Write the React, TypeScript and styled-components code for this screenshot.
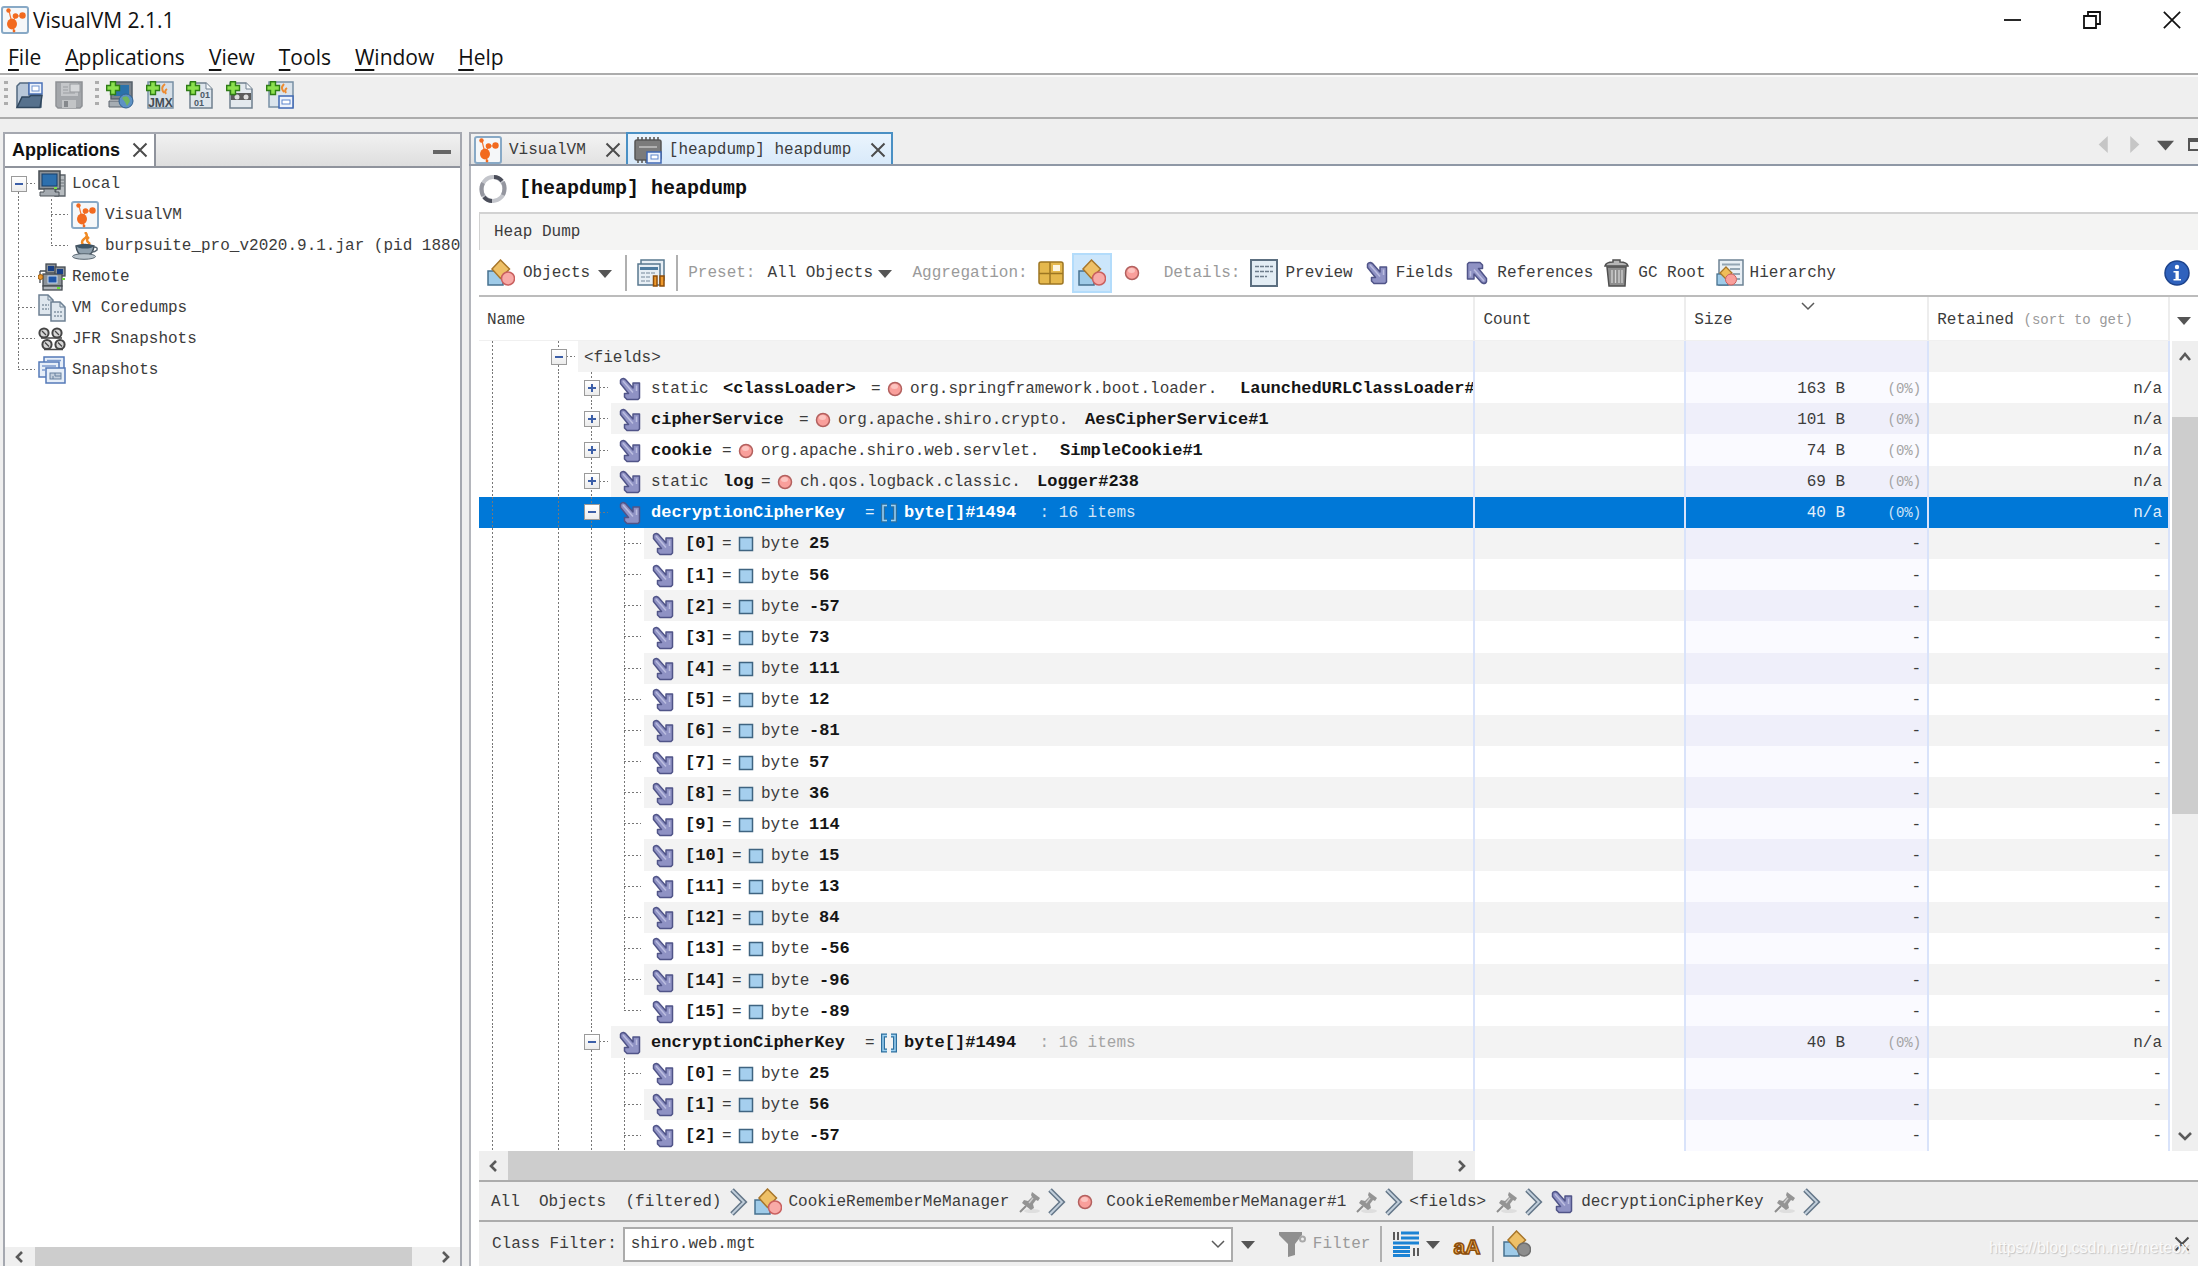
import React from 'react';
import styled, { createGlobalStyle, css } from 'styled-components';

const mono = `"Liberation Mono", "Noto Sans CJK SC", monospace`;
const ui = `"Open Sans", "Noto Sans", sans-serif`;

const Global = createGlobalStyle`
  * { box-sizing: border-box; }
  body { margin: 0; background: #efefef; color: #3c3c3c; font: 16px/20px ${mono}; }
  button, input, select { font: inherit; color: inherit; margin: 0; }
  svg { display: block; flex: none; }
`;

/* ---------- icons ---------- */

const VmIcon = () => (
  <svg width="28" height="28" viewBox="0 0 28 28">
    <rect x="1" y="1" width="26" height="26" rx="2" fill="#f5f7f9" stroke="#88a9c6" strokeWidth="2" />
    <path d="M8 5 L11 17 M11 17 L13 25 M11 17 L15 10 H22" stroke="#f47b3a" strokeWidth="1.2" fill="none" />
    <g fill="#f26a1f">
      <ellipse cx="11" cy="18" rx="5" ry="5.4" />
      <circle cx="7.5" cy="4.5" r="2.2" />
      <circle cx="14.5" cy="10" r="2.8" />
      <circle cx="21.5" cy="9.5" r="3.2" />
      <circle cx="13" cy="25" r="1.4" />
    </g>
  </svg>
);

const ShapesIcon = ({ muted = false }: { muted?: boolean }) => (
  <svg width="28" height="28" viewBox="0 0 28 28">
    <rect x="1" y="12" width="15" height="14" fill="#9fcbe8" stroke="#47718f" strokeWidth="1.5" />
    <path d="M13.5 1 L22.5 10 L13.5 19.5 L5 10 Z" fill="#eec067" stroke="#a8762a" strokeWidth="1.5" />
    <circle cx="21" cy="19.5" r="6.5" fill={muted ? '#8d8d8d' : '#f8aaa7'} stroke={muted ? '#6f6f6f' : '#c9605f'} strokeWidth="1.5" />
  </svg>
);

const ArrowIcon = ({ up = false }: { up?: boolean }) => (
  <svg width="22" height="24" viewBox="0 0 22 24">
    <g transform={up ? 'rotate(180 11 12)' : undefined}>
      <path
        d="M1.5 3.5 Q2 1.5 4.5 1.5 L6.5 2.5 L14 11 V6 H20.5 V21 L19 22.5 H8 L5.5 20 V16.5 H9.5 L1.5 6.5 Z"
        fill="#8f92c4" stroke="#505488" strokeWidth="1.5" strokeLinejoin="round"
      />
      <path d="M4 4 L14 15.5 M17.5 8.500 V14" fill="none" stroke="#bcbee0" strokeWidth="1.5" />
    </g>
  </svg>
);

const DotIcon = () => (
  <svg width="16" height="16" viewBox="0 0 16 16">
    <circle cx="8" cy="8" r="6.5" fill="#f99f9b" stroke="#b3605e" strokeWidth="1.5" />
    <ellipse cx="7.5" cy="5.5" rx="3.5" ry="2.5" fill="#fcc4c0" />
  </svg>
);

const ByteIcon = () => (
  <svg width="16" height="16" viewBox="0 0 16 16">
    <rect x="1.5" y="1.5" width="13" height="13" fill="#a5cfee" stroke="#3f6481" strokeWidth="1.5" />
  </svg>
);

const ArrayIcon = () => (
  <svg width="18" height="20" viewBox="0 0 18 20">
    <path d="M7 2.5 H3 V17.5 H7 M11 2.5 H15 V17.5 H11" fill="none" stroke="#2d6f9e" strokeWidth="4" />
    <path d="M7 2.5 H3 V17.5 H7 M11 2.5 H15 V17.5 H11" fill="none" stroke="#9fd2f2" strokeWidth="1.5" />
  </svg>
);

const Triangle = ({ dir = 'down', color = '#555', size = 14 }: { dir?: string; color?: string; size?: number }) => (
  <svg width={size} height={size} viewBox="0 0 14 14">
    {dir === 'down' && <path d="M0 4 H14 L7 12 Z" fill={color} />}
    {dir === 'left' && <path d="M10.5 0 V14 L3 7 Z" fill={color} />}
    {dir === 'right' && <path d="M3.5 0 V14 L11 7 Z" fill={color} />}
  </svg>
);

const Chevron = ({ dir, thin = false }: { dir: 'left' | 'right' | 'up' | 'down'; thin?: boolean }) => {
  const paths = { left: 'M9 2 L4 7 L9 12', right: 'M5 2 L10 7 L5 12', up: 'M2 10 L7 4 L12 10', down: 'M1 4 L7 10 L13 4' };
  return (
    <svg width="14" height="14" viewBox="0 0 14 14">
      <path d={paths[dir]} fill="none" stroke="#5a5a5a" strokeWidth={thin ? 1.5 : 2.6} />
    </svg>
  );
};

const Cross = ({ size = 16, color = '#4c4c4c', width = 2 }: { size?: number; color?: string; width?: number }) => (
  <svg width={size} height={size} viewBox="0 0 16 16">
    <path d="M1.5 1.5 L14.5 14.5 M14.5 1.5 L1.5 14.5" stroke={color} strokeWidth={width} fill="none" />
  </svg>
);

const Plus = () => (
  <path d="M4.5 0.7 H9.5 V4.5 H13.5 V9.5 H9.5 V13.5 H4.5 V9.5 H0.7 V4.5 H4.5 Z" fill="#8be04e" stroke="#2f7d16" strokeWidth="1.4" />
);

const OpenIcon = () => (
  <svg width="28" height="28" viewBox="0 0 28 28">
    <path d="M2 26 V5 L5 2 H14 V14 H26 V26 Z" fill="#b8c7d8" stroke="#51687f" strokeWidth="1.5" />
    <rect x="14" y="2" width="13" height="11" fill="#eef3fb" stroke="#4a72b8" strokeWidth="1.5" />
    <rect x="17" y="5" width="7" height="5" fill="#fff" stroke="#6f93d0" />
    <path d="M2 26.5 L7 16 H14 L16 14.5 H27 L25 26.5 Z" fill="#56718d" stroke="#2f465d" strokeWidth="1.5" />
  </svg>
);

const SaveIcon = () => (
  <svg width="28" height="28" viewBox="0 0 28 28">
    <path d="M1 1 H27 V25 L25 27 H3 L1 25 Z" fill="#a3a6aa" stroke="#8e9195" strokeWidth="1.5" />
    <rect x="6" y="2" width="17" height="13" fill="#c4c6c9" />
    <rect x="15" y="3" width="10" height="8" fill="#d6d8da" stroke="#96999d" />
    <path d="M8 6 H13 M8 9 H13 M8 12 H20" stroke="#9a9da1" />
    <rect x="7" y="19" width="14" height="8" fill="#c2c4c6" />
    <rect x="9" y="20" width="4" height="6" fill="#85888c" />
  </svg>
);

const AddRemoteIcon = () => (
  <svg width="28" height="28" viewBox="0 0 28 28">
    <rect x="5" y="1" width="21" height="17" fill="#7c858e" stroke="#56606a" strokeWidth="1.5" />
    <rect x="8" y="4" width="15" height="11" fill="#2b72aa" />
    <path d="M3 20 H20 V26 H3 Z" fill="#a6adb3" stroke="#5c656e" />
    <circle cx="20" cy="20" r="7" fill="#5d91c4" stroke="#33618f" />
    <path d="M16 17 Q19 14 22 16 L24 20 L21 25 L19 21 Z" fill="#70b65b" />
    <Plus />
  </svg>
);

const AddJmxIcon = () => (
  <svg width="28" height="28" viewBox="0 0 28 28">
    <rect x="2" y="1" width="25" height="26" fill="#d5dfe8" stroke="#7890a5" strokeWidth="1.5" />
    <path d="M19 3 Q14 7 18 12 M21 8 Q18 10 20 13" stroke="#ec8b33" strokeWidth="2" fill="none" />
    <text x="14.5" y="26" textAnchor="middle" fontFamily="Liberation Sans" fontWeight="700" fontSize="12" fill="#444d55">JMX</text>
    <Plus />
  </svg>
);

const AddCoreIcon = () => (
  <svg width="28" height="28" viewBox="0 0 28 28">
    <path d="M4 2 H20 L26 8 V27 H4 Z" fill="#dfe6ed" stroke="#70808f" strokeWidth="1.5" />
    <path d="M20 2 V8 H26" fill="#f6f9fb" stroke="#70808f" />
    <text x="19" y="17" textAnchor="middle" fontFamily="Liberation Sans" fontWeight="700" fontSize="9" fill="#4d5a66">01</text>
    <text x="13" y="25" textAnchor="middle" fontFamily="Liberation Sans" fontWeight="700" fontSize="9" fill="#4d5a66">01</text>
    <Plus />
  </svg>
);

const AddJfrIcon = () => (
  <svg width="28" height="28" viewBox="0 0 28 28">
    <path d="M4 2 H20 L26 8 V27 H4 Z" fill="#e3e9ee" stroke="#70808f" strokeWidth="1.5" />
    <path d="M20 2 V8 H26" fill="#f6f9fb" stroke="#70808f" />
    <path d="M5 19 H25 V12 H5 Z" fill="#5b5b5b" />
    <circle cx="11" cy="16" r="2.5" fill="#ddd" />
    <circle cx="20" cy="16" r="2.5" fill="#ddd" />
    <Plus />
  </svg>
);

const AddSnapshotIcon = () => (
  <svg width="28" height="28" viewBox="0 0 28 28">
    <rect x="3" y="1" width="24" height="25" fill="#dbe4ec" stroke="#7890a5" strokeWidth="1.5" />
    <path d="M18 3 Q14 7 18 11 M21 7 Q18 9 20 12" stroke="#ec8b33" strokeWidth="2" fill="none" />
    <rect x="13" y="15" width="14" height="12" fill="#eef3fb" stroke="#3f68b4" strokeWidth="1.5" />
    <rect x="16" y="19" width="8" height="4" fill="#fff" stroke="#5c85cc" />
    <Plus />
  </svg>
);

const LocalIcon = () => (
  <svg width="28" height="28" viewBox="0 0 28 28">
    <path d="M20 5 H27 V26 H17 Z" fill="#b7bcc0" stroke="#5b6268" strokeWidth="1.3" />
    <path d="M22 10 H26 M22 13 H26 M22 16 H26" stroke="#6c747b" />
    <rect x="1" y="1" width="21" height="18" fill="#8c9399" stroke="#464c52" strokeWidth="1.5" />
    <rect x="4" y="4" width="15" height="12" fill="#2d70ae" stroke="#173f6a" />
    <path d="M6 19 H17 V22 H21 V26 H2 V22 H6 Z" fill="#a4aab0" stroke="#4c5359" />
    <rect x="16" y="17" width="3" height="2" fill="#7be04a" />
  </svg>
);

const RemoteIcon = () => (
  <svg width="28" height="28" viewBox="0 0 28 28">
    <g fill="#8c9399" stroke="#464c52" strokeWidth="1.3">
      <rect x="8" y="1" width="10" height="9" />
      <rect x="17" y="4" width="10" height="9" />
      <path d="M2 8 V20 M2 8 H8" fill="none" />
      <rect x="5" y="11" width="19" height="12" />
      <rect x="5" y="23" width="19" height="4" fill="#b2b7bb" />
    </g>
    <rect x="10" y="3" width="6" height="5" fill="#173f86" />
    <rect x="19" y="6" width="6" height="5" fill="#173f86" />
    <rect x="10" y="13" width="9" height="7" fill="#1f56a8" stroke="#c7d8ee" />
    <circle cx="2.5" cy="14" r="2.5" fill="#e9962f" stroke="#9c5f12" />
    <path d="M24 16 H27 M19 25 H22" stroke="#6adf33" strokeWidth="2" />
  </svg>
);

const CoredumpIcon = () => (
  <svg width="28" height="28" viewBox="0 0 28 28">
    <g fill="#dfe7ee" stroke="#6d8093" strokeWidth="1.5">
      <path d="M1 1 H10 L15 6 V21 H1 Z" />
      <path d="M13 8 H22 L27 13 V27 H13 Z" />
    </g>
    <path d="M10 1 V6 H15 M22 8 V13 H27" fill="none" stroke="#6d8093" />
    <path d="M4 11 H11 M4 15 H11 M16 18 H24 M16 22 H24" stroke="#8494a3" strokeWidth="1.5" strokeDasharray="2 1" />
  </svg>
);

const JfrIcon = () => (
  <svg width="28" height="24" viewBox="0 0 28 24">
    <g fill="#d6d6d6" stroke="#454545" strokeWidth="2">
      <circle cx="6" cy="6" r="4.6" />
      <circle cx="19" cy="6" r="4.6" />
      <circle cx="9" cy="17.5" r="4.6" />
      <circle cx="22" cy="17.5" r="4.6" />
    </g>
    <path d="M3 11 H24 M6 22.5 H25 M4 4 L8 8 M17 4 L21 8 M7 15.500 L11 19.500 M20 15.500 L24 19.500" stroke="#454545" strokeWidth="1.3" />
  </svg>
);

const SnapshotsIcon = () => (
  <svg width="28" height="28" viewBox="0 0 28 28">
    <g fill="#e6eef8" stroke="#5479b8" strokeWidth="1.5">
      <rect x="6" y="1" width="20" height="16" />
      <rect x="1" y="6" width="20" height="15" />
      <rect x="8" y="12" width="19" height="15" />
    </g>
    <path d="M9 4.5 H23 M4 10 H18 M4 14 H7" stroke="#7d9bcd" strokeWidth="1.5" />
    <rect x="12" y="17" width="11" height="6" fill="#c3cfdd" stroke="#66809e" />
    <path d="M17 17 V20 H23 M15 20 V23" stroke="#66809e" fill="none" />
  </svg>
);

const JavaIcon = () => (
  <svg width="28" height="28" viewBox="0 0 28 28">
    <path d="M14 0 Q18 4 13 7 Q9 10 13 14 M18 5 Q14 8 18 11 Q19 12 17 14" stroke="#f08a24" strokeWidth="2.5" fill="none" />
    <path d="M5 14 Q14 11 23 14 Q22 22 17 23 H11 Q6 22 5 14 Z" fill="#8fa0ad" stroke="#44525e" strokeWidth="1.5" />
    <ellipse cx="14" cy="14.5" rx="8" ry="2" fill="#3d5566" />
    <path d="M23 15 Q27 15 26 18 Q24 20 21 20" stroke="#5a6873" strokeWidth="1.5" fill="none" />
    <ellipse cx="13" cy="24.5" rx="11.5" ry="2.8" fill="#b8c3cb" stroke="#56646f" />
  </svg>
);

const HeapIcon = () => (
  <svg width="28" height="28" viewBox="0 0 28 28">
    <path d="M4 1 V27 M8 1 V27 M12 1 V27 M16 1 V27 M20 1 V27 M24 1 V27" stroke="#777" strokeWidth="2" />
    <rect x="1" y="4" width="26" height="20" rx="2" fill="#7b7b7b" stroke="#565656" strokeWidth="1.5" />
    <path d="M5 11 H23" stroke="#b0b0b0" strokeWidth="2" />
    <rect x="13" y="16" width="14" height="11" fill="#eef3fb" stroke="#3f68b4" strokeWidth="1.5" />
    <rect x="17" y="19" width="7" height="4" fill="#fff" stroke="#5c85cc" />
  </svg>
);

const SpinnerIcon = () => (
  <svg width="28" height="30" viewBox="0 0 28 30">
    <ellipse cx="14" cy="15" rx="11.5" ry="12" fill="none" stroke="#c3c5cb" strokeWidth="4" />
    <path d="M24 8 Q27 14 24 21 M4 22 Q1 15 4 9" fill="none" stroke="#94969f" strokeWidth="4" />
    <path d="M15 3 Q20 3 23 7 M5 23 Q8 27 13 27" fill="none" stroke="#4b4e5a" strokeWidth="4" />
  </svg>
);

const ReportIcon = () => (
  <svg width="28" height="28" viewBox="0 0 28 28">
    <rect x="4" y="1" width="23" height="20" fill="#e8eff5" stroke="#58788f" strokeWidth="1.5" />
    <rect x="1" y="5" width="22" height="21" fill="#e8eff5" stroke="#58788f" strokeWidth="1.5" />
    <rect x="3" y="8" width="18" height="3" fill="#4f7ca0" />
    <path d="M4 14 H19 M4 18 H14 M4 22 H14" stroke="#9aabb8" strokeWidth="1.5" strokeDasharray="4 1" />
    <path d="M16.5 17 H20 V27 H16.5 Z M23 17 H27 V27 H23 Z" fill="#ef9a2c" stroke="#8d4e0b" strokeWidth="1.5" />
  </svg>
);

const PackageIcon = () => (
  <svg width="26" height="26" viewBox="0 0 26 26">
    <rect x="1" y="2" width="24" height="22" rx="2" fill="#e5b84d" stroke="#9d7622" strokeWidth="1.5" />
    <path d="M12 2 V24 M1 13.5 H25" stroke="#9d7622" strokeWidth="1.5" />
    <rect x="15" y="5" width="7" height="6" fill="#fdf6e2" />
  </svg>
);

const PreviewIcon = () => (
  <svg width="28" height="28" viewBox="0 0 28 28">
    <rect x="1" y="1" width="26" height="26" fill="#e3edf4" stroke="#5c6f80" strokeWidth="2" />
    <path d="M5 7.5 H23 M5 12.5 H23 M5 17.5 H17" stroke="#6d7d8b" strokeWidth="1.6" strokeDasharray="4 1" />
  </svg>
);

const TrashIcon = () => (
  <svg width="26" height="28" viewBox="0 0 26 28">
    <path d="M3 8 H22 L21 27 H5 Z" fill="#8e8e8e" stroke="#505050" strokeWidth="1.5" />
    <path d="M8 11 V24 M11.5 11 V24 M15 11 V24 M18 11 V24" stroke="#d3d3d3" strokeWidth="1.3" />
    <path d="M1 7 Q2 3 9 3 V1 H16 V3 Q23 3 24 7 Z" fill="#b5b5b5" stroke="#505050" strokeWidth="1.5" />
  </svg>
);

const HierarchyIcon = () => (
  <svg width="28" height="28" viewBox="0 0 28 28">
    <rect x="3" y="1" width="24" height="25" fill="#e8eff5" stroke="#6d8394" strokeWidth="1.5" />
    <path d="M6 5.5 H24 M14 10 H24 M17 15 H24 M21 20 H24" stroke="#93a5b3" strokeWidth="2" />
    <rect x="1" y="15" width="11" height="11" fill="#9fcbe8" stroke="#47718f" strokeWidth="1.3" />
    <path d="M10 8 L16 14 L10 20 L4 14 Z" fill="#f0bd58" stroke="#a8762a" strokeWidth="1.3" />
    <circle cx="15" cy="20.5" r="5.5" fill="#f99f9b" stroke="#c9605f" />
  </svg>
);

const InfoIcon = () => (
  <svg width="26" height="26" viewBox="0 0 26 26">
    <circle cx="13" cy="13" r="12" fill="#2f62bd" stroke="#1d438c" strokeWidth="1.5" />
    <circle cx="13" cy="7" r="2.2" fill="#fff" />
    <path d="M9.5 11 H14.8 V19 H17 V20.5 H9.5 V19 H11.5 V12.5 H9.5 Z" fill="#fff" />
  </svg>
);

const PinIcon = () => (
  <svg width="24" height="24" viewBox="0 0 24 24">
    <ellipse cx="14" cy="21" rx="8" ry="2" fill="#dedede" />
    <path d="M14 2 L22 8 L20 11 L18 10 L15 14 L16 18 L13 20 L4 13 L6 10 L10 11 L14 7 L13 5 Z" fill="#949494" />
    <path d="M8 16 L2 22" stroke="#8c8c8c" strokeWidth="2" />
    <path d="M15 8 L11 13" stroke="#cfcfcf" strokeWidth="1.5" />
  </svg>
);

const CrumbArrow = () => (
  <svg width="18" height="28" viewBox="0 0 18 28">
    <path d="M2 2 L14 14 L2 26" fill="none" stroke="#66788a" strokeWidth="5" />
    <path d="M2 2 L14 14 L2 26" fill="none" stroke="#c3d0dc" strokeWidth="1.8" />
  </svg>
);

const FunnelIcon = () => (
  <svg width="28" height="26" viewBox="0 0 28 26">
    <path d="M1 1 H24 V4 L17 13 V24 L10 26 V13 L1 4 Z" fill="#8f8f8f" />
    <circle cx="24.500" cy="8" r="2.500" fill="none" stroke="#a9a9a9" strokeWidth="2" />
  </svg>
);

const RowsIcon = () => (
  <svg width="28" height="26" viewBox="0 0 28 26">
    <path d="M9 2 H27 M9 7 H27 M1 12 H27 M1 16.5 H18 M1 20.5 H18 M1 24.5 H18" stroke="#1c83d4" strokeWidth="3" />
    <path d="M2 1 V9 M6 1 V9 M22 17 V25 M26 17 V25" stroke="#4b4b4b" strokeWidth="1.8" />
  </svg>
);

const CaseIcon = () => (
  <svg width="28" height="26" viewBox="0 0 28 26">
    <text x="14" y="23" textAnchor="middle" fontFamily="Liberation Sans" fontWeight="700" fontSize="21" fill="#f6b45a" stroke="#8b4d0b" strokeWidth="1.5">aA</text>
  </svg>
);

/* ---------- window frame ---------- */

const Window = styled.div`
  display: flex;
  flex-direction: column;
  height: 100vh;
  overflow: hidden;
`;

const TitleBar = styled.header`
  display: flex;
  align-items: center;
  height: 41px;
  padding: 0 16px 2px 1px;
  gap: 4px;
  background: #fff;
`;

const Title = styled.h1`
  flex: 1;
  margin: 0;
  font: 21px/28px ${ui};
  color: #111;
`;

const WindowControls = styled.div`
  display: flex;
  gap: 60px;
`;

const IconButton = styled.button`
  display: flex;
  align-items: center;
  justify-content: center;
  flex: none;
  padding: 0;
  border: 0;
  background: none;
`;

const MenuBar = styled.nav`
  display: flex;
  gap: 24px;
  height: 34px;
  padding: 0 8px;
  background: #fff;
  border-bottom: 2px solid #acacac;
`;

const MenuItem = styled.button`
  padding: 0;
  border: 0;
  background: none;
  font: 21px/32px ${ui};
  color: #111;
  u { text-underline-offset: 4px; text-decoration-thickness: 2px; }
`;

const Toolbar = styled.div`
  display: flex;
  align-items: center;
  gap: 12px;
  height: 44px;
  padding: 0 4px 5px;
  border-top: 2px solid #fbfbfb;
  border-bottom: 2px solid #acacac;
`;

const Grip = styled.span`
  width: 4px;
  height: 28px;
  margin-right: -5px;
  background: repeating-linear-gradient(to bottom, #adadad 0 3px, transparent 3px 7px);
`;

const Workspace = styled.main`
  display: flex;
  flex: 1;
  min-height: 0;
  gap: 7px;
  padding: 13px 0 0 3px;
`;

/* ---------- applications panel ---------- */

const Panel = styled.section`
  display: flex;
  flex-direction: column;
  flex: 0 0 459px;
  min-width: 0;
  border: solid #a5a8b0;
  border-width: 2px 2px 0;
  background: #fff;
`;

const PanelHead = styled.div`
  display: flex;
  height: 34px;
  border-bottom: 2px solid #8f939c;
  background: linear-gradient(#f1f1f1, #dedede);
`;

const PanelTab = styled.div`
  display: flex;
  align-items: center;
  gap: 12px;
  padding: 0 6px 0 7px;
  border-right: 2px solid #8f939c;
  background: #fff;
`;

const PanelTitle = styled.h2`
  margin: 0;
  font: bold 18px/24px "Liberation Sans", Arial, sans-serif;
  color: #111;
`;

const Minimize = styled.button`
  width: 18px;
  height: 4px;
  margin: 16px 9px 0 auto;
  padding: 0;
  border: 0;
  background: #666;
`;

const Tree = styled.ul`
  flex: 1;
  margin: 0;
  padding: 0;
  overflow: hidden;
  list-style: none;
`;

const TreeItem = styled.li`
  display: flex;
  align-items: center;
  height: 31px;
  white-space: pre;
`;

const TreeLabel = styled.span`
  padding-left: 6px;
`;

type GuideKind = 'blank' | 'line' | 'branch' | 'corner' | 'root';

const dotsV = 'repeating-linear-gradient(to bottom, #777 0 2px, transparent 2px 4px)';
const dotsH = 'repeating-linear-gradient(to right, #777 0 2px, transparent 2px 4px)';
const guideBackground: Record<GuideKind, string> = {
  blank: 'none',
  line: `${dotsV} 13px 0 / 1px 100% no-repeat`,
  branch: `${dotsV} 13px 0 / 1px 100% no-repeat, ${dotsH} 13px 50% / 17px 1px no-repeat`,
  corner: `${dotsV} 13px 0 / 1px 50% no-repeat, ${dotsH} 13px 50% / 17px 1px no-repeat`,
  root: `${dotsV} 13px 100% / 1px 50% no-repeat, ${dotsH} 13px 50% / 17px 1px no-repeat`,
};

const Guide = styled.span<{ $kind: GuideKind }>`
  display: flex;
  align-items: center;
  flex: 0 0 33px;
  align-self: stretch;
  padding-left: 6px;
  background: ${p => guideBackground[p.$kind]};
`;

const Expander = styled.button<{ $open?: boolean }>`
  width: 16px;
  height: 16px;
  padding: 0;
  border: 1px solid #9a9a9a;
  background:
    linear-gradient(#3c5fa8, #3c5fa8) center / 8px 2px no-repeat,
    ${p => (p.$open ? '' : 'linear-gradient(#3c5fa8, #3c5fa8) center / 2px 8px no-repeat,')}
    linear-gradient(#fff, #ececec);
`;

/* ---------- scroll bars ---------- */

const HScroll = styled.div<{ $height: number }>`
  display: flex;
  align-items: center;
  flex: none;
  height: ${p => p.$height}px;
  background: #efefef;
`;

const HThumb = styled.div<{ $grow: number }>`
  flex: ${p => p.$grow} 0 0;
  align-self: stretch;
  background: #cdcdcd;
`;

const HRest = styled.div<{ $grow: number }>`
  flex: ${p => p.$grow} 0 0;
`;

const VScroll = styled.div`
  display: flex;
  flex-direction: column;
  align-items: center;
  flex: 1;
  margin-left: 2px;
  background: #efefef;
`;

const VThumb = styled.div`
  flex: 397 0 0;
  align-self: stretch;
  background: #cdcdcd;
`;

const VRest = styled.div<{ $grow: number }>`
  flex: ${p => p.$grow} 0 0;
`;

/* ---------- editor ---------- */

const Editor = styled.section`
  display: flex;
  flex-direction: column;
  flex: 1;
  min-width: 0;
`;

const Tabs = styled.div`
  display: flex;
  height: 34px;
  border-bottom: 2px solid #8f98a6;
`;

const Tab = styled.div<{ $active?: boolean }>`
  display: flex;
  align-items: center;
  padding: 2px 5px 0 ${p => (p.$active ? 6 : 3)}px;
  gap: 7px;
  border: solid ${p => (p.$active ? '#4a90c4' : '#a5a8b0')};
  border-width: 2px ${p => (p.$active ? '2px' : '0')} 0 2px;
  background: ${p => (p.$active ? 'linear-gradient(#eaf4fd, #d9eafa)' : 'linear-gradient(#f3f3f3, #e2e2e2)')};
`;

const TabText = styled.button`
  padding: 0 12px 0 0;
  border: 0;
  background: none;
`;

const TabNav = styled.div`
  display: flex;
  align-items: center;
  gap: 14px;
  margin-left: auto;
  padding-bottom: 8px;
`;

const MaximizeStub = styled.span`
  width: 10px;
  height: 13px;
  border: solid #555;
  border-width: 4px 0 2px 2px;
`;

const EditorBody = styled.div`
  display: flex;
  flex-direction: column;
  flex: 1;
  min-height: 0;
  padding-left: 8px;
  border-left: 2px solid #b4b6bc;
  background: #fff;
`;

const Heading = styled.div`
  display: flex;
  align-items: center;
  gap: 12px;
  flex: none;
  height: 46px;
`;

const HeadingText = styled.h2`
  margin: 0;
  font: bold 20px/26px ${mono};
  color: #111;
`;

const SubTab = styled.div`
  flex: none;
  padding: 8px 14px;
  height: 38px;
  border: solid #d2d2d2;
  border-width: 2px 0 0 1px;
  background: #f4f4f3;
`;

const Actions = styled.div`
  display: flex;
  align-items: center;
  flex: none;
  height: 47px;
  padding: 1px 8px 0;
  border-bottom: 2px solid #bcbcbc;
`;

const ActionButton = styled.button<{ $after?: number; $gap?: number }>`
  display: flex;
  align-items: center;
  flex: none;
  gap: ${p => p.$gap ?? 7}px;
  margin-right: ${p => p.$after ?? 13}px;
  padding: 0;
  border: 0;
  background: none;
  &:disabled { color: #9a9a9a; }
`;

const ToggleOn = styled.button`
  display: flex;
  align-items: center;
  justify-content: center;
  width: 40px;
  height: 40px;
  margin: 0 12px 0 8px;
  padding: 0;
  border: 2px solid #b3dcfb;
  background: #cce6fb;
`;

const Rule = styled.span<{ $after?: number }>`
  width: 2px;
  height: 36px;
  margin-right: ${p => p.$after ?? 10}px;
  background: #b0b0b0;
`;

const Caption = styled.label<{ $after?: number; $before?: number }>`
  margin-left: ${p => p.$before ?? 0}px;
  margin-right: ${p => p.$after ?? 12}px;
  color: #9a9a9a;
`;

const Preset = styled.select`
  appearance: none;
  width: 106px;
  margin-right: 5px;
  padding: 0;
  border: 0;
  background: none;
`;

const Push = styled.span`
  margin-left: auto;
`;

/* ---------- heap table ---------- */

const TableArea = styled.div`
  display: flex;
  flex: 1;
  min-height: 0;
`;

const columns = css`
  display: grid;
  grid-template-columns: 997fr 211fr 243fr 241fr;
`;

const Table = styled.table`
  display: flex;
  flex-direction: column;
  flex: 1;
  min-width: 0;
`;

const Head = styled.thead`
  display: block;
`;

const HeadRow = styled.tr`
  ${columns}
  height: 44px;
`;

const HeadCell = styled.th`
  display: flex;
  align-items: center;
  justify-content: space-between;
  min-width: 0;
  padding: 2px 8px 0;
  border-right: 2px solid #ededed;
  border-bottom: 1px solid #f0f0f0;
  font-weight: normal;
  white-space: pre;
  small { font-size: 14px; color: #9a9a9a; }
`;

const SortMark = styled.span`
  align-self: flex-start;
  margin: 0 auto;
  padding: 0 36px 0 0;
`;

const Body = styled.tbody`
  display: grid;
  grid-auto-rows: minmax(0, 1fr);
  flex: 1;
  min-height: 0;
`;

const Row = styled.tr<{ $selected?: boolean }>`
  ${columns}
  min-height: 0;
  --fill: #fff;
  --size: #fafaff;
  --faint: #a4a4a4;
  &:nth-child(odd) { --fill: #f3f3f3; --size: #efeffa; }
  ${p => p.$selected && css`
    && { --fill: #0078d7; --size: #0078d7; --faint: #cfe4f7; }
    color: #e3effa;
    background: #0078d7;
  `}
`;

const Cell = styled.td<{ $size?: boolean }>`
  display: flex;
  align-items: center;
  justify-content: flex-end;
  min-width: 0;
  padding: 2px 6px 0;
  border-right: 2px solid #d9e3fa;
  background: var(${p => (p.$size ? '--size' : '--fill')});
`;

const NameCell = styled.td`
  display: flex;
  min-width: 0;
  padding: 0;
  overflow: hidden;
  border-right: 2px solid #d9e3fa;
`;

const NameBody = styled.span<{ $plain?: boolean }>`
  display: flex;
  align-items: center;
  flex: 1;
  padding: 2px 0 0 ${p => (p.$plain ? 6 : 8)}px;
  background: var(--fill);
  white-space: pre;
`;

const Faint = styled.span`
  width: 76px;
  font-size: 14px;
  text-align: right;
  color: var(--faint);
`;

/* A text run whose box is reserved by its character count. */
const Run = styled.span<{ $width: number }>`
  flex: 0 0 ${p => p.$width}px;
`;

const BoldRun = styled(Run)<{ $light?: boolean }>`
  font-weight: bold;
  font-size: 17px;
  color: ${p => (p.$light ? '#fff' : '#151515')};
`;

const Note = styled.span`
  color: var(--faint);
`;

const Slot = styled.span<{ $width: number; $start?: boolean }>`
  display: flex;
  justify-content: ${p => (p.$start ? 'flex-start' : 'center')};
  flex: 0 0 ${p => p.$width}px;
`;

const ColumnMenu = styled.div`
  display: flex;
  flex-direction: column;
  flex: 0 0 28px;
`;

const ColumnButton = styled.button`
  height: 44px;
  padding: 2px 0 0 7px;
  border: 0;
  background: none;
`;

const ScrollRow = styled.div`
  ${columns}
  flex: none;
  height: 29px;
  padding-right: 28px;
`;

/* ---------- bottom bars ---------- */

const Crumbs = styled.nav`
  display: flex;
  align-items: center;
  flex: none;
  height: 40px;
  padding: 2px 0 0 12px;
  border-top: 2px solid #acacac;
  background: #efefef;
  white-space: pre;
`;

const Crumb = styled.a<{ $gap?: number }>`
  display: flex;
  align-items: center;
  gap: ${p => p.$gap ?? 6}px;
  margin-right: 9px;
  color: inherit;
  text-decoration: none;
`;

const CrumbEnd = styled.span`
  display: flex;
  align-items: center;
  gap: 6px;
  margin-right: 6px;
`;

const FilterBar = styled.form`
  position: relative;
  display: flex;
  align-items: center;
  flex: none;
  height: 46px;
  padding: 0 8px 0 13px;
  border-top: 2px solid #acacac;
  background: #efefef;
`;

const ComboBox = styled.div`
  display: flex;
  align-items: center;
  width: 610px;
  height: 35px;
  margin: 0 8px 0 6px;
  padding: 0 6px;
  border: 2px solid #ababab;
  background: #fff;
`;

const FilterInput = styled.input`
  flex: 1;
  min-width: 0;
  padding: 0;
  border: 0;
  outline: 0;
`;

const Watermark = styled.span`
  position: absolute;
  right: 9px;
  bottom: 8px;
  font: 16px/20px "Liberation Sans", Arial, sans-serif;
  color: #fafafa;
  text-shadow: 1px 1px 1px #c4c4c4;
  pointer-events: none;
`;

/* ---------- data ---------- */

const menus = ['File', 'Applications', 'View', 'Tools', 'Window', 'Help'];

const apps: { label: string; icon: React.ReactNode; guides: GuideKind[]; open?: boolean }[] = [
  { label: 'Local', icon: <LocalIcon />, guides: ['root'], open: true },
  { label: 'VisualVM', icon: <VmIcon />, guides: ['line', 'branch'] },
  { label: 'burpsuite_pro_v2020.9.1.jar (pid 18808)', icon: <JavaIcon />, guides: ['line', 'corner'] },
  { label: 'Remote', icon: <RemoteIcon />, guides: ['branch'] },
  { label: 'VM Coredumps', icon: <CoredumpIcon />, guides: ['branch'] },
  { label: 'JFR Snapshots', icon: <JfrIcon />, guides: ['branch'] },
  { label: 'Snapshots', icon: <SnapshotsIcon />, guides: ['corner'] },
];

type Field = { kind: 'field'; isStatic?: boolean; name: string; pkg?: string; value: string; items?: string; size: string; selected?: boolean };
type Item = { kind: 'item'; index: number; value: number; last?: boolean };
type Entry = { kind: 'group' } | Field | Item;

const key = [25, 56, -57, 73, 111, 12, -81, 57, 36, 114, 15, 13, 84, -56, -96, -89];
const items = (values: number[], closed: boolean): Item[] =>
  values.map((value, index) => ({ kind: 'item', index, value, last: closed && index === values.length - 1 }));

const entries: Entry[] = [
  { kind: 'group' },
  { kind: 'field', isStatic: true, name: '<classLoader>', pkg: 'org.springframework.boot.loader.', value: 'LaunchedURLClassLoader#1', size: '163 B' },
  { kind: 'field', name: 'cipherService', pkg: 'org.apache.shiro.crypto.', value: 'AesCipherService#1', size: '101 B' },
  { kind: 'field', name: 'cookie', pkg: 'org.apache.shiro.web.servlet.', value: 'SimpleCookie#1', size: '74 B' },
  { kind: 'field', isStatic: true, name: 'log', pkg: 'ch.qos.logback.classic.', value: 'Logger#238', size: '69 B' },
  { kind: 'field', name: 'decryptionCipherKey', value: 'byte[]#1494', items: ': 16 items', size: '40 B', selected: true },
  ...items(key, true),
  { kind: 'field', name: 'encryptionCipherKey', value: 'byte[]#1494', items: ': 16 items', size: '40 B' },
  ...items(key.slice(0, 3), false),
];

const boldWidth = (text: string) => text.length * 11 + 5;
const plainWidth = (text: string) => Math.round(text.length * 10.3);

const FieldRow = ({ f }: { f: Field }) => (
  <Row $selected={f.selected} aria-selected={!!f.selected}>
    <NameCell>
      <Guide $kind="line" />
      <Guide $kind="blank" />
      <Guide $kind="line" />
      <Guide $kind="branch"><Expander type="button" $open={!f.pkg} aria-label={f.pkg ? 'Expand' : 'Collapse'} /></Guide>
      <NameBody>
        <Slot $width={32} $start><ArrowIcon /></Slot>
        {f.isStatic && <Run $width={plainWidth('static ')}>static</Run>}
        <BoldRun $width={boldWidth(f.name)} $light={f.selected}>{f.name}</BoldRun>
        <Run $width={15}>=</Run>
        <Slot $width={18}>{f.pkg ? <DotIcon /> : <ArrayIcon />}</Slot>
        <Slot $width={6} />
        {f.pkg && <Run $width={plainWidth(f.pkg)}>{f.pkg}</Run>}
        <BoldRun $width={boldWidth(f.value)} $light={f.selected}>{f.value}</BoldRun>
        {f.items && <Note> {f.items}</Note>}
      </NameBody>
    </NameCell>
    <Cell />
    <Cell $size>{f.size}<Faint>(0%)</Faint></Cell>
    <Cell>n/a</Cell>
  </Row>
);

const ItemRow = ({ it }: { it: Item }) => {
  const label = `[${it.index}]`;
  return (
    <Row>
      <NameCell>
        <Guide $kind="line" />
        <Guide $kind="blank" />
        <Guide $kind="line" />
        <Guide $kind="line" />
        <Guide $kind={it.last ? 'corner' : 'branch'} />
        <NameBody>
          <Slot $width={33} $start><ArrowIcon /></Slot>
          <BoldRun $width={label.length * 10 + 7}>{label}</BoldRun>
          <Run $width={15}>=</Run>
          <Slot $width={18}><ByteIcon /></Slot>
          <Slot $width={6} />
          <Run $width={48}>byte</Run>
          <BoldRun $width={48}>{it.value}</BoldRun>
        </NameBody>
      </NameCell>
      <Cell />
      <Cell $size>-</Cell>
      <Cell>-</Cell>
    </Row>
  );
};

const GroupRow = () => (
  <Row>
    <NameCell>
      <Guide $kind="line" />
      <Guide $kind="blank" />
      <Guide $kind="branch"><Expander type="button" $open aria-label="Collapse" /></Guide>
      <NameBody $plain>&lt;fields&gt;</NameBody>
    </NameCell>
    <Cell />
    <Cell $size />
    <Cell />
  </Row>
);

const tools = [
  { label: 'Add Remote Host', icon: <AddRemoteIcon /> },
  { label: 'Add JMX Connection', icon: <AddJmxIcon /> },
  { label: 'Add VM Coredump', icon: <AddCoreIcon /> },
  { label: 'Add JFR Snapshot', icon: <AddJfrIcon /> },
  { label: 'Add Snapshot', icon: <AddSnapshotIcon /> },
];

const crumbs = [
  { label: 'CookieRememberMeManager', icon: <ShapesIcon />, gap: 6 },
  { label: 'CookieRememberMeManager#1', icon: <Slot $width={26}><DotIcon /></Slot>, gap: 8 },
  { label: '<fields>', icon: null, gap: 6 },
  { label: 'decryptionCipherKey', icon: <Slot $width={26}><ArrowIcon /></Slot>, gap: 6 },
];

export default function App() {
  return (
    <Window>
      <Global />
      <TitleBar>
        <VmIcon />
        <Title>VisualVM 2.1.1</Title>
        <WindowControls>
          <IconButton aria-label="Minimize">
            <svg width="20" height="20" viewBox="0 0 20 20"><path d="M2 10 H19" stroke="#111" strokeWidth="1.8" /></svg>
          </IconButton>
          <IconButton aria-label="Restore">
            <svg width="20" height="20" viewBox="0 0 20 20">
              <path d="M2 6 H14 V18 H2 Z M6 6 V2 H18 V14 H14" fill="none" stroke="#111" strokeWidth="1.8" />
            </svg>
          </IconButton>
          <IconButton aria-label="Close"><Cross size={20} color="#111" width={1.4} /></IconButton>
        </WindowControls>
      </TitleBar>
      <MenuBar>
        {menus.map(m => <MenuItem key={m}><u>{m[0]}</u>{m.slice(1)}</MenuItem>)}
      </MenuBar>
      <Toolbar>
        <Grip />
        <IconButton aria-label="Load"><OpenIcon /></IconButton>
        <IconButton aria-label="Save" disabled><SaveIcon /></IconButton>
        <Grip />
        {tools.map(t => <IconButton key={t.label} aria-label={t.label}>{t.icon}</IconButton>)}
      </Toolbar>

      <Workspace>
        <Panel>
          <PanelHead>
            <PanelTab>
              <PanelTitle>Applications</PanelTitle>
              <IconButton aria-label="Close Applications"><Cross /></IconButton>
            </PanelTab>
            <Minimize aria-label="Minimize Applications" />
          </PanelHead>
          <Tree>
            {apps.map(a => (
              <TreeItem key={a.label}>
                {a.guides.map((g, i) => (
                  <Guide key={i} $kind={g}>{a.open && <Expander $open aria-label="Collapse" />}</Guide>
                ))}
                {a.icon}
                <TreeLabel>{a.label}</TreeLabel>
              </TreeItem>
            ))}
          </Tree>
          <HScroll $height={19}>
            <Slot $width={30}><Chevron dir="left" /></Slot>
            <HThumb $grow={377} />
            <HRest $grow={18} />
            <Slot $width={30}><Chevron dir="right" /></Slot>
          </HScroll>
        </Panel>

        <Editor>
          <Tabs>
            <Tab>
              <VmIcon />
              <TabText>VisualVM</TabText>
              <IconButton aria-label="Close VisualVM"><Cross /></IconButton>
            </Tab>
            <Tab $active>
              <HeapIcon />
              <TabText>[heapdump] heapdump</TabText>
              <IconButton aria-label="Close heapdump"><Cross /></IconButton>
            </Tab>
            <TabNav>
              <IconButton aria-label="Previous tab"><Triangle dir="left" color="#c6c6c6" size={17} /></IconButton>
              <IconButton aria-label="Next tab"><Triangle dir="right" color="#c6c6c6" size={17} /></IconButton>
              <IconButton aria-label="Tab list"><Triangle size={17} /></IconButton>
              <MaximizeStub />
            </TabNav>
          </Tabs>

          <EditorBody>
            <Heading>
              <SpinnerIcon />
              <HeadingText>[heapdump] heapdump</HeadingText>
            </Heading>
            <SubTab>Heap Dump</SubTab>
            <Actions>
              <ActionButton $gap={8}><ShapesIcon />Objects<Triangle /></ActionButton>
              <Rule />
              <ActionButton $after={11} aria-label="Report"><ReportIcon /></ActionButton>
              <Rule />
              <Caption htmlFor="preset">Preset:</Caption>
              <Preset id="preset"><option>All Objects</option></Preset>
              <Triangle />
              <Caption as="span" $before={20} $after={10}>Aggregation:</Caption>
              <IconButton aria-label="Packages"><PackageIcon /></IconButton>
              <ToggleOn aria-label="Classes" aria-pressed="true"><ShapesIcon /></ToggleOn>
              <ActionButton $after={24} aria-label="Instances"><DotIcon /></ActionButton>
              <Caption as="span" $after={10}>Details:</Caption>
              <ActionButton><PreviewIcon />Preview</ActionButton>
              <ActionButton $gap={8}><ArrowIcon />Fields</ActionButton>
              <ActionButton $gap={9} $after={11}><ArrowIcon up />References</ActionButton>
              <ActionButton $gap={8} $after={10}><TrashIcon />GC Root</ActionButton>
              <ActionButton $gap={6}><HierarchyIcon />Hierarchy</ActionButton>
              <Push><IconButton aria-label="Info"><InfoIcon /></IconButton></Push>
            </Actions>

            <TableArea>
              <Table>
                <Head>
                  <HeadRow>
                    <HeadCell>Name</HeadCell>
                    <HeadCell>Count</HeadCell>
                    <HeadCell>Size<SortMark><Chevron dir="down" thin /></SortMark></HeadCell>
                    <HeadCell><span>Retained <small>(sort to get)</small></span></HeadCell>
                  </HeadRow>
                </Head>
                <Body>
                  {entries.map((e, i) =>
                    e.kind === 'group' ? <GroupRow key={i} /> : e.kind === 'field' ? <FieldRow key={i} f={e} /> : <ItemRow key={i} it={e} />,
                  )}
                </Body>
              </Table>
              <ColumnMenu>
                <ColumnButton aria-label="Choose columns"><Triangle /></ColumnButton>
                <VScroll>
                  <VRest $grow={9} />
                  <Chevron dir="up" />
                  <VRest $grow={53} />
                  <VThumb />
                  <VRest $grow={315} />
                  <Chevron dir="down" />
                  <VRest $grow={8} />
                </VScroll>
              </ColumnMenu>
            </TableArea>
            <ScrollRow>
              <HScroll $height={29}>
                <Slot $width={29}><Chevron dir="left" /></Slot>
                <HThumb $grow={902} />
                <HRest $grow={33} />
                <Slot $width={29}><Chevron dir="right" /></Slot>
              </HScroll>
            </ScrollRow>

            <Crumbs aria-label="Path">
              <Crumb href="#all">All  Objects  (filtered)</Crumb>
              <CrumbEnd><CrumbArrow /></CrumbEnd>
              {crumbs.map(c => (
                <React.Fragment key={c.label}>
                  <Crumb href="#node" $gap={c.gap}>{c.icon}{c.label}</Crumb>
                  <CrumbEnd><PinIcon /><CrumbArrow /></CrumbEnd>
                </React.Fragment>
              ))}
            </Crumbs>
            <FilterBar onSubmit={e => e.preventDefault()}>
              <label htmlFor="filter">Class Filter:</label>
              <ComboBox>
                <FilterInput id="filter" defaultValue="shiro.web.mgt" />
                <IconButton type="button" aria-label="History"><Chevron dir="down" thin /></IconButton>
              </ComboBox>
              <ActionButton type="button" $after={23} aria-label="Filter type"><Triangle /></ActionButton>
              <ActionButton disabled $after={10}><FunnelIcon />Filter</ActionButton>
              <Rule />
              <ActionButton type="button" $gap={6} aria-label="Filter scope"><RowsIcon /><Triangle /></ActionButton>
              <ActionButton type="button" $after={11} aria-label="Match case"><CaseIcon /></ActionButton>
              <Rule $after={9} />
              <ActionButton type="button" aria-label="Filter objects"><ShapesIcon muted /></ActionButton>
              <Push><IconButton type="button" aria-label="Close filter"><Cross /></IconButton></Push>
              <Watermark>https://blog.csdn.net/meteox</Watermark>
            </FilterBar>
          </EditorBody>
        </Editor>
      </Workspace>
    </Window>
  );
}
